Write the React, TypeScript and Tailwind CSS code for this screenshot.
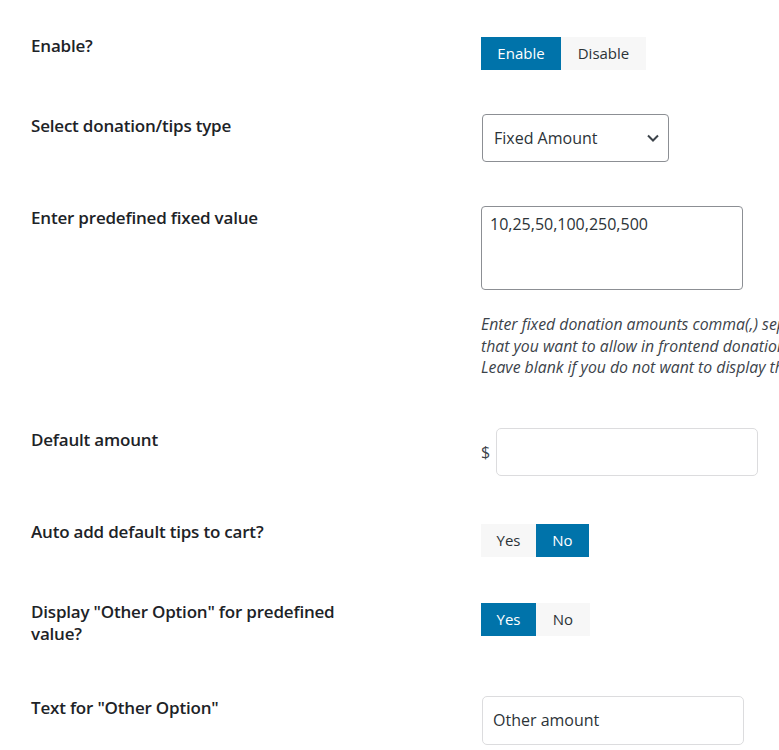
import { ReactNode } from 'react';
import clsx from 'clsx';

interface ToggleOption {
  label: string;
  width: string;
  active?: boolean;
}

const Toggle = ({ options }: { options: ToggleOption[] }) => (
  <div className="flex h-[33px]">
    {options.map((opt) => (
      <button
        key={opt.label}
        type="button"
        className={clsx(
          'h-full text-[15px] leading-none flex items-center justify-center',
          opt.width,
          opt.active ? 'bg-[#0073aa] text-white' : 'bg-[#f7f7f7] text-[#2c3338]'
        )}
      >
        {opt.label}
      </button>
    ))}
  </div>
);

const Row = ({
  label,
  labelOffset,
  className,
  children,
}: {
  label: ReactNode;
  labelOffset: string;
  className?: string;
  children: ReactNode;
}) => (
  <div className={clsx('flex items-start', className)}>
    <div className={clsx('w-[450px] shrink-0', labelOffset)}>
      <div className="max-w-[330px] text-[17px] leading-[22px] font-semibold text-[#1d2327] tracking-[-0.2px]">
        {label}
      </div>
    </div>
    <div className="shrink-0">{children}</div>
  </div>
);

export default function App() {
  return (
    <div className="min-h-screen w-full overflow-hidden bg-white pl-[31px] pt-[37px] font-['Segoe_UI','Open_Sans',sans-serif]">
      <Row label="Enable?" labelOffset="-mt-[2px]">
        <Toggle
          options={[
            { label: 'Enable', width: 'w-[80px]', active: true },
            { label: 'Disable', width: 'w-[85px]' },
          ]}
        />
      </Row>

      <Row label="Select donation/tips type" labelOffset="mt-[1px]" className="mt-[44px]">
        <div className="relative ml-[1px] w-[187px]">
          <select
            defaultValue="fixed"
            className="h-[48px] w-full appearance-none rounded-[4px] border border-[#8c8f94] bg-white pl-[11px] pr-8 text-[16px] text-[#2c3338] outline-none"
          >
            <option value="fixed">Fixed Amount</option>
            <option value="percent">Percentage</option>
          </select>
          {/* chevron */}
          <svg
            className="pointer-events-none absolute right-[9px] top-[19px] h-[10px] w-[14px]"
            viewBox="0 0 14 10"
            fill="none"
            stroke="#3c434a"
            strokeWidth="2"
          >
            <path d="M2 2.5 7 7.5l5-5" />
          </svg>
        </div>
      </Row>

      <Row label="Enter predefined fixed value" labelOffset="mt-[1px]" className="mt-[44px]">
        <textarea
          defaultValue="10,25,50,100,250,500"
          className="block h-[84px] w-[262px] resize-none rounded-[4px] border border-[#8c8f94] bg-white px-[8px] py-[5px] text-[16px] leading-[24px] text-[#2c3338] outline-none"
        />
        <p className="mt-[24px] w-[380px] whitespace-nowrap text-[15.8px] italic leading-[21.5px] text-[#3c434a]">
          Enter fixed donation amounts comma(,) separated
          <br />
          that you want to allow in frontend donation/tips.
          <br />
          Leave blank if you do not want to display this.
        </p>
      </Row>

      <Row label="Default amount" labelOffset="mt-[1px]" className="mt-[49px]">
        <div className="flex items-center gap-[6px]">
          <span className="text-[16px] text-[#3c434a]">$</span>
          <input
            type="text"
            className="h-[48px] w-[262px] rounded-[5px] border border-[#dcdcde] bg-white px-3 text-[16px] outline-none"
          />
        </div>
      </Row>

      <Row label="Auto add default tips to cart?" labelOffset="-mt-[3px]" className="mt-[48px]">
        <Toggle
          options={[
            { label: 'Yes', width: 'w-[55px]' },
            { label: 'No', width: 'w-[53px]', active: true },
          ]}
        />
      </Row>

      <Row
        label={'Display "Other Option" for predefined value?'}
        labelOffset="-mt-[2px]"
        className="mt-[46px]"
      >
        <Toggle
          options={[
            { label: 'Yes', width: 'w-[55px]', active: true },
            { label: 'No', width: 'w-[54px]' },
          ]}
        />
      </Row>

      <Row label={'Text for "Other Option"'} labelOffset="mt-[1px]" className="mt-[51px]">
        <input
          type="text"
          defaultValue="Other amount"
          className="ml-[1px] h-[49px] w-[262px] rounded-[5px] border border-[#dcdcde] bg-white px-[10px] text-[16px] text-[#2c3338] outline-none"
        />
      </Row>
    </div>
  );
}
